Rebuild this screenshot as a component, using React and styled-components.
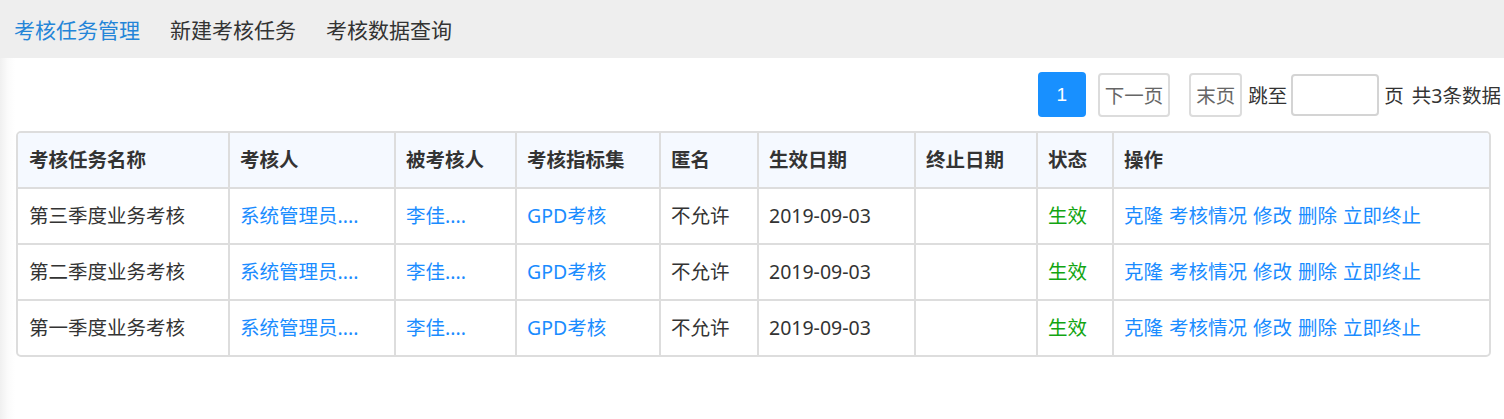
import React from "react";
import styled, { createGlobalStyle } from "styled-components";

const GlobalStyle = createGlobalStyle`
  html, body { margin: 0; padding: 0; background: #fff; }
  body {
    font-family: "Noto Sans", "Noto Sans CJK SC", "Microsoft YaHei", sans-serif;
    color: #333;
  }
`;

const Page = styled.div`
  min-height: 419px;
  display: flex;
  flex-direction: column;
`;

const Nav = styled.nav`
  height: 58px;
  background: #eeeeee;
  display: flex;
  align-items: center;
  gap: 30px;
  padding-left: 14px;
`;

const NavItem = styled.a`
  font-size: 21px;
  color: ${(p) => (p.$active ? "#2485d8" : "#333")};
  text-decoration: none;
  cursor: pointer;
`;

const Main = styled.main`
  flex: 1;
  background: linear-gradient(to right, #f0f0f0 0, #fbfbfb 8px, #fff 15px);
  padding-top: 14px;
`;

const Pager = styled.div`
  display: flex;
  align-items: center;
  justify-content: flex-end;
  height: 45px;
  padding-right: 3px;
  font-size: 19.5px;
  color: #333;
`;

const PageButton = styled.button`
  box-sizing: border-box;
  height: ${(p) => (p.$active ? "45px" : "44px")};
  min-width: ${(p) => (p.$active ? "48px" : "auto")};
  padding: 0 ${(p) => (p.$active ? "0" : "5px")};
  margin-left: ${(p) => p.$gap || 0}px;
  border-radius: 4px;
  border: ${(p) => (p.$active ? "none" : "2px solid #dcdcdc")};
  background: ${(p) => (p.$active ? "#1890ff" : "#fff")};
  color: ${(p) => (p.$active ? "#fff" : "#666")};
  font-family: ${(p) => (p.$active ? '"Liberation Sans", Arial, sans-serif' : "inherit")};
  font-size: ${(p) => (p.$active ? "19px" : "19.5px")};
  display: flex;
  align-items: center;
  justify-content: center;
  cursor: pointer;
`;

const PagerText = styled.span`
  margin-left: ${(p) => p.$gap || 0}px;
  white-space: nowrap;
  word-spacing: ${(p) => p.$wordGap || 0}px;
`;

const JumpInput = styled.input`
  box-sizing: border-box;
  width: 88px;
  height: 42px;
  margin-left: 4px;
  border: 2px solid #d4d4d4;
  border-radius: 4px;
  outline: none;
  font-size: 18px;
  padding: 0 6px;
`;

const TableWrap = styled.div`
  margin: 14px 13px 0 16px;
  border: 2px solid #dddddd;
  border-radius: 5px;
  overflow: hidden;
`;

const Table = styled.table`
  width: 100%;
  table-layout: fixed;
  border-collapse: separate;
  border-spacing: 0;
  font-size: 19.5px;
`;

const Th = styled.th`
  background: #f5f9ff;
  font-weight: 700;
  text-align: left;
  color: #333;
  line-height: 54px;
  padding: 0 0 0 ${(p) => (p.$first ? 11 : 10)}px;
  border-left: ${(p) => (p.$first ? "none" : "2px solid #dddddd")};
  white-space: nowrap;
`;

const Td = styled.td`
  line-height: 54px;
  padding: 0 0 0 ${(p) => (p.$first ? 11 : 10)}px;
  border-top: 2px solid #dddddd;
  border-left: ${(p) => (p.$first ? "none" : "2px solid #dddddd")};
  color: ${(p) => (p.$tone === "green" ? "#12a512" : "#333")};
  white-space: nowrap;
  overflow: hidden;
`;

const Link = styled.a`
  color: #1a8cff;
  text-decoration: none;
  cursor: pointer;
`;

const Actions = styled.div`
  display: flex;
  gap: 6px;
`;

const columns = [
  { title: "考核任务名称", width: 210 },
  { title: "考核人", width: 166 },
  { title: "被考核人", width: 121 },
  { title: "考核指标集", width: 144 },
  { title: "匿名", width: 98 },
  { title: "生效日期", width: 157 },
  { title: "终止日期", width: 122 },
  { title: "状态", width: 76 },
  { title: "操作" },
];

const rows = [
  { name: "第三季度业务考核" },
  { name: "第二季度业务考核" },
  { name: "第一季度业务考核" },
];

const actions = ["克隆", "考核情况", "修改", "删除", "立即终止"];

export default function App() {
  return (
    <Page>
      <GlobalStyle />
      <Nav>
        <NavItem $active>考核任务管理</NavItem>
        <NavItem>新建考核任务</NavItem>
        <NavItem>考核数据查询</NavItem>
      </Nav>
      <Main>
        <Pager>
          <PageButton $active>1</PageButton>
          <PageButton $gap={12}>下一页</PageButton>
          <PageButton $gap={19}>末页</PageButton>
          <PagerText $gap={6}>跳至</PagerText>
          <JumpInput />
          <PagerText $gap={5} $wordGap={3}>页 共3条数据</PagerText>
        </Pager>
        <TableWrap>
          <Table>
            <colgroup>
              {columns.map((c, i) => (
                <col key={i} style={c.width ? { width: c.width } : undefined} />
              ))}
            </colgroup>
            <thead>
              <tr>
                {columns.map((c, i) => (
                  <Th key={i} $first={i === 0}>
                    {c.title}
                  </Th>
                ))}
              </tr>
            </thead>
            <tbody>
              {rows.map((r, i) => (
                <tr key={i}>
                  <Td $first>{r.name}</Td>
                  <Td>
                    <Link>系统管理员....</Link>
                  </Td>
                  <Td>
                    <Link>李佳....</Link>
                  </Td>
                  <Td>
                    <Link>GPD考核</Link>
                  </Td>
                  <Td>不允许</Td>
                  <Td>2019-09-03</Td>
                  <Td></Td>
                  <Td $tone="green">生效</Td>
                  <Td>
                    <Actions>
                      {actions.map((a) => (
                        <Link key={a}>{a}</Link>
                      ))}
                    </Actions>
                  </Td>
                </tr>
              ))}
            </tbody>
          </Table>
        </TableWrap>
      </Main>
    </Page>
  );
}
